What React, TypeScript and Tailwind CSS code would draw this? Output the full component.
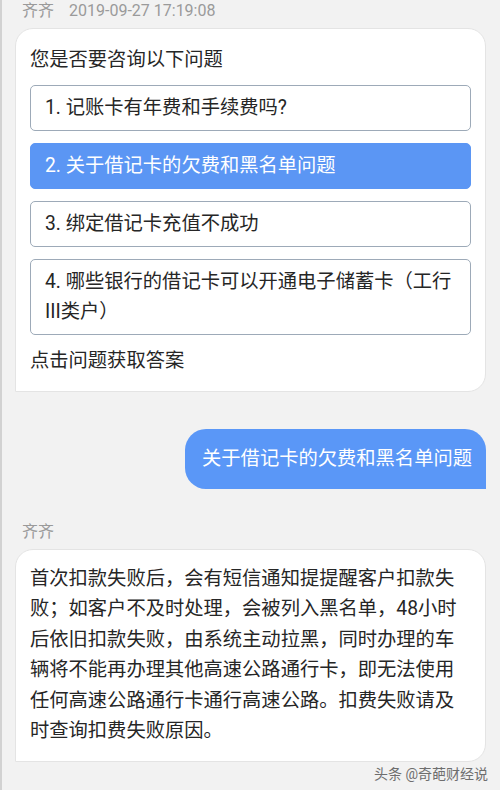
import React from "react"

const font = { fontFamily: 'Roboto, "Noto Sans CJK SC", "Noto Sans", sans-serif' }

const options = [
  { id: 1, text: "1. 记账卡有年费和手续费吗?" },
  { id: 2, text: "2. 关于借记卡的欠费和黑名单问题", active: true },
  { id: 3, text: "3. 绑定借记卡充值不成功" },
]

const answer = [
  "首次扣款失败后，会有短信通知提提醒客户扣款失",
  "败；如客户不及时处理，会被列入黑名单，48小时",
  "后依旧扣款失败，由系统主动拉黑，同时办理的车",
  "辆将不能再办理其他高速公路通行卡，即无法使用",
  "任何高速公路通行卡通行高速公路。扣费失败请及",
  "时查询扣费失败原因。",
]

export default function App() {
  return (
    <div
      className="w-[500px] h-[790px] overflow-hidden bg-[#f2f2f2] border-l-2 border-[#d2d2d2] flex flex-col text-[#262626]"
      style={font}
    >
      {/* 第一条消息 */}
      <div className="pl-[20px] text-[16px] leading-[22px] text-[#9a9a9a] flex gap-[15px]">
        <span>齐齐</span>
        <span>2019-09-27 17:19:08</span>
      </div>

      <div className="mt-[6px] ml-[13px] w-[471px] bg-white border border-[#e4e4e4] rounded-[18px] rounded-bl-none px-[14px] pt-[16px] pb-[15px]">
        <div className="text-[19.3px] leading-[30px]">您是否要咨询以下问题</div>
        <div className="mt-[10px] flex flex-col gap-[12px]">
          {options.map((o) =>
            o.active ? (
              <div
                key={o.id}
                className="rounded-[5px] bg-[#5b96f4] border border-[#5b96f4] text-white pl-[14px] py-[7px] text-[19.3px] leading-[30px]"
              >
                {o.text}
              </div>
            ) : (
              <div
                key={o.id}
                className="rounded-[5px] border border-[#9daab8] pl-[14px] py-[7px] text-[19.3px] leading-[30px]"
              >
                {o.text}
              </div>
            )
          )}
          <div className="rounded-[5px] border border-[#9daab8] pl-[14px] py-[7px] text-[19.3px] leading-[30px]">
            4. 哪些银行的借记卡可以开通电子储蓄卡（工行
            <br />
            III类户）
          </div>
        </div>
        <div className="mt-[11px] text-[19.3px] leading-[30px]">点击问题获取答案</div>
      </div>

      {/* 用户消息 */}
      <div className="mt-[37px] flex justify-end pr-[14px]">
        <div className="bg-[#5a97f7] text-white rounded-[21px] rounded-br-none pl-[17px] pr-[14px] py-[15px] text-[19.3px] leading-[30px]">
          关于借记卡的欠费和黑名单问题
        </div>
      </div>

      {/* 回复 */}
      <div className="mt-[32px] pl-[20px] text-[16px] leading-[22px] text-[#9a9a9a]">齐齐</div>
      <div className="mt-[6px] ml-[13px] w-[471px] bg-white border border-[#e4e4e4] rounded-[18px] rounded-bl-none px-[14px] pt-[14px] pb-[15px] text-[19.3px] leading-[30.4px]">
        {answer.map((line, i) => (
          <div key={i}>{line}</div>
        ))}
      </div>

      <div className="mt-[3px] pr-[12px] flex justify-end text-[14px] leading-[18px] text-[#6e6e6e]">
        头条 @奇葩财经说
      </div>
    </div>
  )
}
